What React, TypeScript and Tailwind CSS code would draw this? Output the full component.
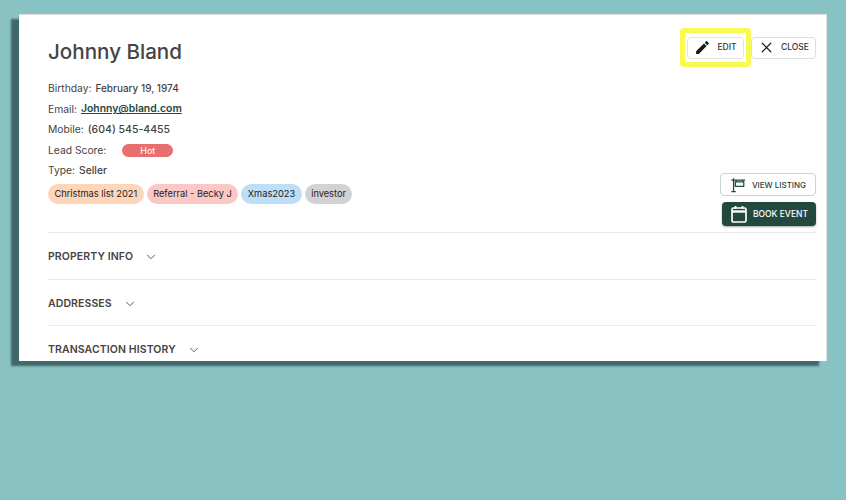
import { ChevronDown, X } from "lucide-react";

const tags = [
  { label: "Christmas list 2021", bg: "bg-[#fdd5b8]" },
  { label: "Referral - Becky J", bg: "bg-[#fcc8c6]" },
  { label: "Xmas2023", bg: "bg-[#bcdef7]" },
  { label: "investor", bg: "bg-[#d2d2d2]" },
];

const sections = ["PROPERTY INFO", "ADDRESSES", "TRANSACTION HISTORY"];

function PencilIcon() {
  return (
    <svg viewBox="0 0 24 24" className="h-[17px] w-[17px] fill-[#1a1a1a]">
      <path d="M3 17.25V21h3.75L17.81 9.94l-3.75-3.75L3 17.25zM20.71 7.04a1 1 0 0 0 0-1.41l-2.34-2.34a1 1 0 0 0-1.41 0l-1.83 1.83 3.75 3.75 1.83-1.83z" />
    </svg>
  );
}

function SignIcon() {
  return (
    <svg viewBox="0 0 18 18" className="h-[16px] w-[16px] fill-none stroke-[#23493f] stroke-[1.4]">
      <path d="M4 1.5v15M1.5 16.5h5M1.5 3.5H17" />
      <path d="M7 3.5v2M14.5 3.5v2M6 5.5h9.5v5H6z" />
    </svg>
  );
}

function CalendarIcon() {
  return (
    <svg viewBox="0 0 18 18" className="h-[18px] w-[18px] fill-none stroke-white stroke-[1.7]">
      <rect x="2" y="3" width="14" height="14" rx="1.5" />
      <path d="M2 6.5h14" strokeWidth="2.4" />
      <path d="M5.5 1v3M12.5 1v3" />
    </svg>
  );
}

function InfoRow({ label, children }: { label: string; children: React.ReactNode }) {
  return (
    <div className="flex h-[20.5px] items-center gap-[4px] text-[10.3px] text-[#444]">
      <span>{label}</span>
      {children}
    </div>
  );
}

export default function App() {
  return (
    <div className="h-[500px] w-[846px] overflow-hidden bg-[#88c2c3] pl-[19px] pt-[14px] font-['Inter','Noto_Sans',sans-serif]">
      <div className="h-[347px] w-[808px] overflow-hidden border-t border-r border-[#e0e0e0] bg-white pl-[29px] pr-[10px] shadow-[-8px_5px_2px_#40676a]">
        {/* Header */}
        <div className="flex items-start justify-between pt-[13px]">
          <h1 className="pt-[9px] text-[20.6px] font-medium leading-[30px] text-[#444]">Johnny Bland</h1>
          <div className="flex items-center">
            <div className="flex h-[39px] w-[71px] items-center rounded-[4px] border-[5px] border-[#f8fa52] bg-white pl-[2px]">
              <button className="flex h-[22px] w-[57px] items-center justify-center gap-[6px] rounded-[4px] border border-[#e2e2e2] bg-white text-[8.5px] font-medium text-[#333]">
                <PencilIcon />
                EDIT
              </button>
            </div>
            <button className="flex h-[22px] w-[65px] items-center justify-center gap-[6px] rounded-[4px] border border-[#dedede] bg-white text-[8.5px] font-medium text-[#333]">
              <X size={17} strokeWidth={1.7} className="text-[#1a1a1a]" />
              CLOSE
            </button>
          </div>
        </div>

        {/* Details */}
        <div className="flex items-end justify-between border-b border-[#ebebeb] pb-[6px] pt-[11.5px]">
          <div className="pb-[22px]">
            <InfoRow label="Birthday:">
              <span className="text-[10px] font-medium">February 19, 1974</span>
            </InfoRow>
            <InfoRow label="Email:">
              <a className="text-[10.4px] font-semibold text-[#23493f] underline">Johnny@bland.com</a>
            </InfoRow>
            <InfoRow label="Mobile:">
              <span className="text-[10.5px] font-medium">(604) 545-4455</span>
            </InfoRow>
            <InfoRow label="Lead Score:">
              <span className="ml-[12px] flex h-[13px] w-[51px] items-center justify-center rounded-full bg-[#e76f6f] text-[9px] text-white">
                Hot
              </span>
            </InfoRow>
            <InfoRow label="Type:">
              <span className="font-medium">Seller</span>
            </InfoRow>
            <div className="mt-[3px] flex gap-[3px]">
              {tags.map((tag) => (
                <span
                  key={tag.label}
                  className={`flex h-[20px] items-center rounded-full px-[6.5px] text-[9.25px] text-[#222] ${tag.bg}`}
                >
                  {tag.label}
                </span>
              ))}
            </div>
          </div>
          <div className="flex flex-col items-end gap-[6px]">
            <button className="flex h-[23px] w-[96px] items-center justify-center gap-[6px] rounded-[4px] border border-[#c9d6d3] bg-white text-[8px] font-medium text-[#23493f]">
              <SignIcon />
              VIEW LISTING
            </button>
            <button className="flex h-[24px] w-[94px] items-center justify-center gap-[5px] rounded-[4px] bg-[#23493f] text-[8.5px] font-medium text-white shadow-[0_1px_2px_rgba(0,0,0,0.35)]">
              <CalendarIcon />
              BOOK EVENT
            </button>
          </div>
        </div>

        {/* Collapsed sections */}
        {sections.map((section) => (
          <div key={section} className="flex h-[46.5px] items-center gap-[11px] border-b border-[#ebebeb] pt-[3px]">
            <span className="text-[10.5px] font-semibold tracking-[0.1px] text-[#444]">{section}</span>
            <ChevronDown size={14} strokeWidth={1.5} className="text-[#444]" />
          </div>
        ))}
      </div>
    </div>
  );
}
